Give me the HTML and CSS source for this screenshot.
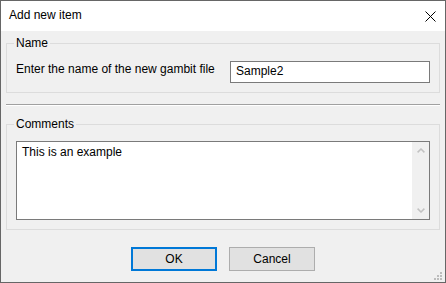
FILE: index.html
```html
<!DOCTYPE html>
<html lang="en">
<head>
<meta charset="utf-8">
<title>Add new item</title>
<link rel="stylesheet" href="styles.css">
</head>
<body>
<div class="window">
  <div class="titlebar">
    <span class="title">Add new item</span>
    <svg class="close" width="11" height="11" viewBox="0 0 11 11"><path d="M0.5 0.5 L10.5 10.5 M10.5 0.5 L0.5 10.5" stroke="#000" stroke-width="1" fill="none"/></svg>
  </div>
  <div class="content">
    <fieldset class="group">
      <legend class="legend">Name</legend>
      <div class="row">
        <label class="label" for="name">Enter the name of the new gambit file</label>
        <input class="textbox" id="name" type="text" value="Sample2">
      </div>
    </fieldset>
    <div class="separator"></div>
    <fieldset class="group group-comments">
      <legend class="legend">Comments</legend>
      <div class="memo">
        <div class="memo-text">This is an example</div>
        <div class="memo-scroll">
          <div class="scroll-btn"><svg width="8" height="5" viewBox="0 0 8 5"><path d="M0.6 4.4 L4 1 L7.4 4.4" stroke="#c2c2c2" stroke-width="1.5" fill="none"/></svg></div>
          <div class="scroll-btn"><svg width="8" height="5" viewBox="0 0 8 5"><path d="M0.6 0.6 L4 4 L7.4 0.6" stroke="#c2c2c2" stroke-width="1.5" fill="none"/></svg></div>
        </div>
      </div>
    </fieldset>
    <div class="buttons">
      <button class="btn btn-default" type="button">OK</button>
      <button class="btn" type="button">Cancel</button>
    </div>
  </div>
  <svg class="grip" width="8" height="8" viewBox="0 0 8 8">
    <rect x="6" y="0" width="2" height="2" fill="#bcbcbc"/>
    <rect x="3" y="3" width="2" height="2" fill="#bcbcbc"/>
    <rect x="6" y="3" width="2" height="2" fill="#bcbcbc"/>
    <rect x="0" y="6" width="2" height="2" fill="#bcbcbc"/>
    <rect x="3" y="6" width="2" height="2" fill="#bcbcbc"/>
    <rect x="6" y="6" width="2" height="2" fill="#bcbcbc"/>
  </svg>
</div>
</body>
</html>
```

FILE: styles.css
```css
html, body {
  margin: 0;
  padding: 0;
  background: #f0f0f0;
}

.window {
  position: relative;
  width: 446px;
  height: 283px;
  box-sizing: border-box;
  border: 1px solid #666666;
  background: #f0f0f0;
  font-family: "Liberation Sans", Arial, sans-serif;
  font-size: 12px;
  color: #000;
  display: flex;
  flex-direction: column;
}

.titlebar {
  height: 30px;
  box-sizing: border-box;
  background: #ffffff;
  display: flex;
  align-items: center;
  justify-content: space-between;
  padding: 0 9px 2px 8px;
}

.title {
  line-height: 16px;
}

.close {
  align-self: flex-start;
  margin-top: 10px;
  display: block;
}

.content {
  padding: 4px 5px 0;
  display: flex;
  flex-direction: column;
}

.group {
  margin: 0;
  padding: 9px 9px 9px;
  border: 1px solid #dcdcdc;
  min-width: 0;
}

.legend {
  padding: 0 2px;
  margin-left: -2px;
  line-height: 16px;
}

.row {
  display: flex;
  justify-content: space-between;
  align-items: flex-start;
}

.label {
  line-height: 16px;
  padding-top: 1px;
}

.textbox {
  margin: 1px 0 0;
  width: 200px;
  height: 22px;
  box-sizing: border-box;
  border: 1px solid #7a7a7a;
  padding: 0 5px 2px;
  font: inherit;
  color: #000;
  background: #fff;
  outline: none;
}

.separator {
  margin-top: 11px;
  border-top: 1px solid #a0a0a0;
  border-bottom: 1px solid #ffffff;
}

.group-comments {
  margin-top: 10px;
}

.memo {
  display: flex;
  height: 79px;
  box-sizing: border-box;
  border: 1px solid #7a7a7a;
  background: #fff;
}

.memo-text {
  flex: 1;
  padding: 2px 5px;
  line-height: 16px;
}

.memo-scroll {
  width: 17px;
  background: #f0f0f0;
  display: flex;
  flex-direction: column;
  justify-content: space-between;
}

.scroll-btn {
  height: 17px;
  display: flex;
  align-items: center;
  justify-content: center;
}

.scroll-btn svg {
  display: block;
}

.buttons {
  margin-top: 17px;
  display: flex;
  justify-content: center;
  gap: 12px;
}

.btn {
  width: 86px;
  height: 24px;
  box-sizing: border-box;
  margin: 0;
  padding: 0;
  font: inherit;
  color: #000;
  background: #e1e1e1;
  border: 1px solid #adadad;
  border-radius: 0;
}

.btn-default {
  border: 2px solid #0078d7;
}

.grip {
  position: absolute;
  right: 3px;
  bottom: 2px;
  display: block;
}
```
